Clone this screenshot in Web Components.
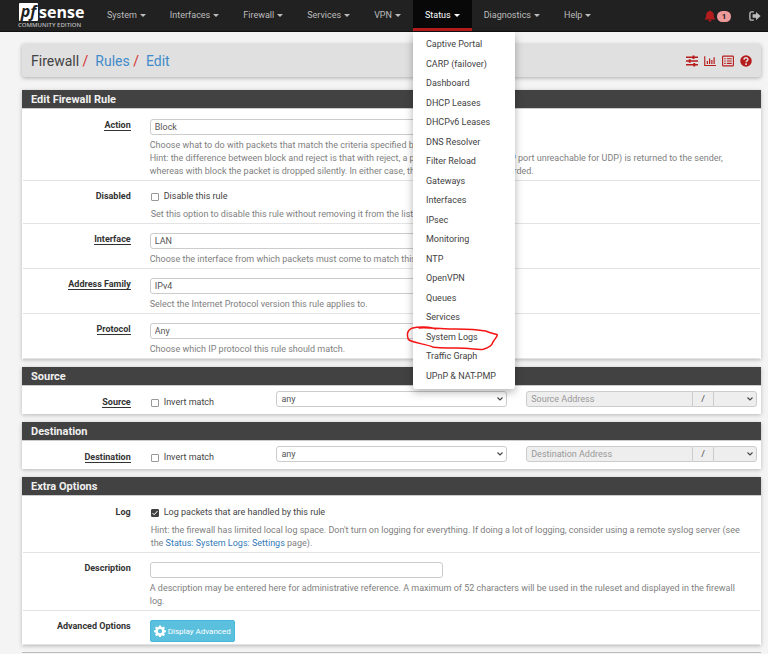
<!DOCTYPE html>
<html lang="en">
<head>
<meta charset="utf-8">
<title>Firewall: Rules: Edit</title>
<style>
body{margin:0;background:#f4f4f4;font-family:Roboto,"Liberation Sans",sans-serif;font-size:9px;line-height:13px;color:#424242}
main{display:flex;flex-direction:column;gap:8px;padding:12px 7px 0 22px}
main>pf-title{margin-bottom:5px}
a{color:#337ab7;text-decoration:none}
.next{border-top:1px solid #bbb;margin-top:-1px}
</style>
</head>
<body>
<pf-navbar></pf-navbar>
<main>
  <pf-title></pf-title>
  <pf-panel heading="Edit Firewall Rule">
    <pf-row label="Action" kind="select" value="Block" required>Choose what to do with packets that match the criteria specified below.<br>Hint: the difference between block and reject is that with reject, a packet (TCP RST or&nbsp;&nbsp; ICMP port unreachable for UDP) is returned to the sender, whereas with block the packet is dropped silently. In either case, the original packet is discarded.</pf-row>
    <pf-row label="Disabled" kind="check" value="Disable this rule">Set this option to disable this rule without removing it from the list.</pf-row>
    <pf-row label="Interface" kind="select" value="LAN" required>Choose the interface from which packets must come to match this rule.</pf-row>
    <pf-row label="Address Family" kind="select" value="IPv4" required>Select the Internet Protocol version this rule applies to.</pf-row>
    <pf-row label="Protocol" kind="select" value="Any" required>Choose which IP protocol this rule should match.</pf-row>
  </pf-panel>
  <pf-panel heading="Source"><pf-address label="Source"></pf-address></pf-panel>
  <pf-panel heading="Destination"><pf-address label="Destination"></pf-address></pf-panel>
  <pf-panel heading="Extra Options">
    <pf-row label="Log" kind="check" value="Log packets that are handled by this rule" checked>Hint: the firewall has limited local log space. Don't turn on logging for everything. If doing a lot of logging, consider using a remote syslog server (see the <a href="#settings">Status: System Logs: Settings</a> page).</pf-row>
    <pf-row label="Description" kind="text">A description may be entered here for administrative reference. A maximum of 52 characters will be used in the ruleset and displayed in the firewall log.</pf-row>
    <pf-row label="Advanced Options" kind="button" value="Display Advanced"></pf-row>
  </pf-panel>
  <div class="next"></div>
</main>
<script>
const base = `*{box-sizing:border-box}a{text-decoration:none;color:inherit}svg{display:block}`;

const controls = base + `
:host{display:block}
.grid{display:grid;grid-template-columns:minmax(0,7fr) minmax(0,7fr) minmax(0,15fr) minmax(0,15fr);column-gap:19px;padding-right:3px}
.name{text-align:right;font-weight:700;color:#333}
.req>*{border-bottom:1px solid #333}
input,select,button{font:inherit;color:#555;margin:0}
.field{display:block;height:16px;border:1px solid #ccc;border-radius:3px;background-color:#fff;padding:0 4px;width:100%;outline:0}
.field::placeholder{color:#999;opacity:1}
select.field{appearance:none;background-image:url("data:image/svg+xml,%3Csvg xmlns='http://www.w3.org/2000/svg' viewBox='0 0 8 8'%3E%3Cpath d='M1.5 2.5 4 5l2.5-2.5' fill='none' stroke='%23444' stroke-width='1.1'/%3E%3C/svg%3E");background-repeat:no-repeat;background-position:right 2px center;background-size:8px 8px}
.field:disabled{background-color:#eee;opacity:1}
.check{display:flex;align-items:center;gap:5px;color:#444}
.check input{appearance:none;width:8px;height:8px;margin-left:1px;border:1px solid #999;border-radius:1px;background-color:#fff}
.check input:checked{border-color:#424242;background:#424242 url("data:image/svg+xml,%3Csvg xmlns='http://www.w3.org/2000/svg' viewBox='0 0 8 8'%3E%3Cpath d='M1.5 4 3.2 5.8 6.5 2' fill='none' stroke='white' stroke-width='1'/%3E%3C/svg%3E") center/8px 8px}
`;

const icons = {
  sliders: '<path d="M0 3h16M0 8h16M0 13h16" stroke="currentColor" stroke-width="1.800"/><path d="M10 .8v4.400M5 5.800v4.400M11 10.800v4.400" stroke="currentColor" stroke-width="2.600"/>',
  chart: '<path d="M1 1.500v12.500h15" fill="none" stroke="currentColor" stroke-width="1.500"/><path d="M4.500 12V8M7.500 12V4.500M10.500 12V6.500M13.500 12V3" stroke="currentColor" stroke-width="1.600"/>',
  list: '<rect x=".8" y="1.500" width="14.400" height="13" rx="1" fill="none" stroke="currentColor" stroke-width="1.500"/><path d="M3 5h2M3 8h2M3 11.200h2M6.500 5H13M6.500 8H13M6.500 11.200H13" stroke="currentColor" stroke-width="1.600"/>',
  help: '<circle cx="8" cy="8" r="7.700" fill="currentColor"/><path d="M5.400 6.200C5.500 2.800 10.700 2.900 10.600 6.100 10.500 7.900 8.100 7.700 8.100 9.700" fill="none" stroke="#e0e0e0" stroke-width="2"/><path d="M7 11h2.200v2.200H7z" fill="#e0e0e0"/>',
  bell: '<path d="M8 .5c.7 0 1.100.5 1.100 1.200C11.700 2.200 13 4 13 6.500c0 3.500 1 4.700 2.500 6H.5C2 11.200 3 10 3 6.500 3 4 4.300 2.200 6.900 1.700 6.900 1 7.300.5 8 .5zM6 13.300h4c0 2.900-4 2.900-4 0z" fill="currentColor"/>',
  out: '<path d="M6.500 2.500H3.300C2 2.500 1.200 3.300 1.200 4.500v7c0 1.200.8 2 2.100 2h3.200" fill="none" stroke="currentColor" stroke-width="1.800"/><path d="M9.300 2.500 15.500 8l-6.200 5.500v-3.300H4.800V5.800h4.500z" fill="currentColor"/>',
  cog: '<path fill="currentColor" fill-rule="evenodd" d="M6.700.5h2.600l.4 2 1.300.6 1.700-1.200 1.900 1.900-1.200 1.700.6 1.300 1.900.3v2.600l-2 .4-.5 1.300 1.200 1.700-1.900 1.900-1.700-1.200-1.300.6-.4 2H6.700l-.4-2-1.300-.6-1.700 1.200-1.900-1.900 1.200-1.700-.6-1.300-1.900-.4V7.100L2 6.800l.6-1.300-1.200-1.700 1.900-1.900L5 3.100l1.300-.6zM8 5.200a2.900 2.900 0 1 0 0 5.800 2.900 2.900 0 0 0 0-5.800z"/>'
};

customElements.define('pf-icon', class extends HTMLElement {
  constructor(){ super(); this.attachShadow({mode:'open'}); }
  connectedCallback(){
    this.shadowRoot.innerHTML = `<style>:host{display:block;width:12px;height:12px}svg{display:block;width:100%;height:100%}</style><svg viewBox="0 0 16 16" aria-hidden="true">${icons[this.getAttribute('name')]}</svg>`;
  }
});

customElements.define('pf-menu', class extends HTMLElement {
  constructor(){
    super();
    const items = ['Captive Portal','CARP (failover)','Dashboard','DHCP Leases','DHCPv6 Leases','DNS Resolver','Filter Reload','Gateways','Interfaces','IPsec','Monitoring','NTP','OpenVPN','Queues','Services','System Logs','Traffic Graph','UPnP & NAT-PMP'];
    this.attachShadow({mode:'open'}).innerHTML = `<style>${base}
:host{display:block;background:#fff;border-radius:0 0 3px 3px;box-shadow:0 3px 8px rgba(0,0,0,.3);color:#424242}
ul{list-style:none;margin:0;padding:3px 0;display:grid;grid-auto-rows:1fr;min-height:357px}
li{position:relative;display:flex;align-items:center;padding:0 19px 0 13px;white-space:nowrap}
svg{position:absolute;left:-10px;top:-6px;width:100px;height:32px;pointer-events:none}
</style><ul>${items.map(t=>`<li><a href="#${t.split(' ')[0]}">${t.replace('&','&amp;')}</a>${t==='System Logs'?'<svg viewBox="60 155 300 96" aria-hidden="true"><path d="M157 176C145 168 105 168 86 174 70 180 72 198 76 207 90 219 125 219 152 231 190 236 210 231 245 234 275 236 287 239 301 237 320 231 327 226 329 217 334 206 342 202 343 193 335 190 325 189 308 182 260 174 220 177 185 175 155 174 125 171 108 173" fill="none" stroke="#f51414" stroke-width="4.500" stroke-linecap="round" stroke-linejoin="round"/></svg>':''}</li>`).join('')}</ul>`;
  }
});

customElements.define('pf-navbar', class extends HTMLElement {
  constructor(){
    super();
    const names = ['System','Interfaces','Firewall','Services','VPN','Status','Diagnostics','Help'];
    this.attachShadow({mode:'open'}).innerHTML = `<style>${base}
:host{display:block;background:#212121;color:#bdbdbd;border-bottom:1px solid #111}
nav{display:flex;height:31px}
.logo{margin-left:18px;width:77px;font-family:"Open Sans",sans-serif;color:#fff;padding-top:3px}
.brand{display:flex;align-items:center;height:18px;font-weight:700;font-size:16px;line-height:18px}
.brand i{background:#fff;color:#212121;width:19px;height:18px;margin:0 1px;border-radius:1px;text-align:center;line-height:16px}
.logo small{display:block;font:600 6px/9px "Open Sans",sans-serif;color:#bbb;white-space:nowrap}
ul{display:flex;list-style:none;margin:0;padding:0}
li{position:relative}
li>a{display:flex;align-items:center;gap:3px;height:31px;padding:0 12px;border-bottom:1px solid transparent}
li>a::after{content:"";border:solid transparent;border-width:3px 3px 0;border-top-color:currentColor}
.on>a{background:#080808;color:#fff;border-bottom:3px solid #b71c1c;padding-top:2px}
pf-menu{position:absolute;top:32px;left:0;z-index:5}
.end{margin-left:auto;display:flex;align-items:center;padding-right:7px;gap:18px}
.bell{display:flex;align-items:center;gap:1px;color:#b71c1c}
b{background:#ef9a9a;color:#212121;border-radius:6px;width:14px;height:11px;margin-top:2px;text-align:center;font-size:8px;line-height:11px}
</style><nav>
<a class="logo" href="#home"><span class="brand"><i>pf</i><span>sense</span></span><small>COMMUNITY EDITION</small></a>
<ul>${names.map(n=>`<li${n==='Status'?' class="on"':''}><a href="#${n}">${n}</a>${n==='Status'?'<pf-menu></pf-menu>':''}</li>`).join('')}</ul>
<div class="end"><a class="bell" href="#notices" aria-label="1 notice"><pf-icon name="bell"></pf-icon><b>1</b></a><a href="#logout" aria-label="Log out"><pf-icon name="out"></pf-icon></a></div></nav>`;
  }
});

customElements.define('pf-title', class extends HTMLElement {
  constructor(){
    super();
    this.attachShadow({mode:'open'}).innerHTML = `<style>${base}
:host{display:flex;justify-content:space-between;align-items:center;height:33px;padding:0 9px;background:#e0e0e0;border-radius:3px;box-shadow:0 1px 4px rgba(0,0,0,.3)}
nav{font-size:14px;line-height:20px;white-space:pre}
nav a{color:#428bca}
nav span{color:#d32f2f}
div{display:flex;gap:6px;color:#b71c1c}
</style><nav>Firewall<span> /</span>  <a href="#rules">Rules</a><span> /</span>  <a href="#edit">Edit</a></nav>
<div>${[['sliders','Advanced'],['chart','Status'],['list','Logs'],['help','Help']].map(([i,l])=>`<a href="#${i}" aria-label="${l}"><pf-icon name="${i}"></pf-icon></a>`).join('')}</div>`;
  }
});

customElements.define('pf-panel', class extends HTMLElement {
  constructor(){ super(); this.attachShadow({mode:'open'}); }
  connectedCallback(){
    this.shadowRoot.innerHTML = `<style>${base}
:host{display:block;background:#fff;box-shadow:0 1px 4px rgba(0,0,0,.25)}
h2{margin:0;padding:0 9px;height:19px;background:#424242;color:#f0f0f0;font-size:11px;line-height:19px;font-weight:700;border-bottom:1px solid #ccc}
div{padding:1px 1px 0}
</style><h2>${this.getAttribute('heading')}</h2><div><slot></slot></div>`;
  }
});

customElements.define('pf-row', class extends HTMLElement {
  constructor(){ super(); this.attachShadow({mode:'open'}); }
  connectedCallback(){
    const a = n => this.getAttribute(n) || '';
    const kind = a('kind');
    const control = {
      select: `<select id="c" class="field"><option>${a('value')}</option></select>`,
      check: `<label class="check"><input id="c" type="checkbox"${this.hasAttribute('checked')?' checked':''}>${a('value')}</label>`,
      text: `<input id="c" class="field" type="text">`,
      button: `<button id="c" type="button"><pf-icon name="cog"></pf-icon>${a('value')}</button>`
    }[kind];
    this.shadowRoot.innerHTML = `<style>${controls}
:host{border-bottom:1px solid #e3e3e3}
.grid{padding-top:9px;padding-bottom:2px}
.body{grid-column:2/-1}
.body>.field{width:calc(50% - 10px)}
.help{margin-top:4px;color:#808080;padding-right:8px}
.kcheck .help{margin:5px 0 0 1px}
.kbutton .help{display:none}
button{display:flex;align-items:center;gap:2px;height:22px;padding:0 3px;border:1px solid #46b8da;border-radius:2px;background:#5bc0de;color:#fff;font-size:8px}
</style><div class="grid k${kind}"><label class="name${this.hasAttribute('required')?' req':''}" for="c"><span>${a('label')}</span></label><div class="body">${control}<div class="help"><slot></slot></div></div></div>`;
  }
});

customElements.define('pf-address', class extends HTMLElement {
  constructor(){ super(); this.attachShadow({mode:'open'}); }
  connectedCallback(){
    const l = this.getAttribute('label');
    this.shadowRoot.innerHTML = `<style>${controls}
.grid{padding-top:4px;padding-bottom:5px}
.name,.check{padding-top:5px}
.group{display:flex}
.group input{border-radius:3px 0 0 3px;flex:1;min-width:0}
.group span{width:20px;height:16px;line-height:14px;border:solid #ccc;border-width:1px 0;background:#eee;text-align:center}
.group select{width:44px;border-radius:0 3px 3px 0}
</style><div class="grid"><label class="name req" for="t"><span>${l}</span></label>
<label class="check"><input type="checkbox">Invert match</label>
<select id="t" class="field"><option>any</option></select>
<div class="group"><input class="field" type="text" placeholder="${l} Address" aria-label="${l} Address" disabled><span>/</span><select class="field" aria-label="${l} mask" disabled></select></div></div>`;
  }
});
</script>
</body>
</html>
